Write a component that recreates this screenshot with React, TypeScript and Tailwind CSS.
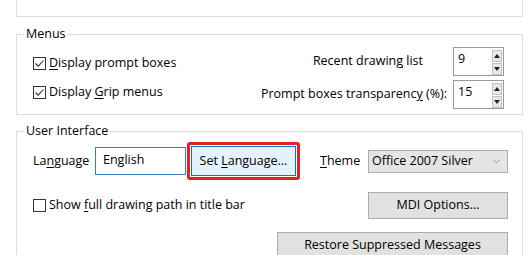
import { ChevronDown } from "lucide-react";

const CheckBox = ({ checked }: { checked: boolean }) => (
  <span className="w-[13px] h-[13px] border border-[#333333] bg-white flex items-center justify-center shrink-0">
    {checked && (
      <svg width="11" height="11" viewBox="0 0 11 11">
        <path d="M1.5 5.5 L4.2 8.2 L9.5 2.5" fill="none" stroke="#333333" strokeWidth="1.1" />
      </svg>
    )}
  </span>
);

const SpinBox = ({ value }: { value: string }) => (
  <div className="w-[51px] h-[29px] border border-[#9a9a9a] bg-white flex items-start justify-between pl-[4px] pr-[1px] pt-[1px]">
    <span className="leading-[20px]">{value}</span>
    <div className="flex flex-col gap-[1px] pt-[1px]">
      <span className="w-[10px] h-[12px] bg-[#e8e8e8] border border-[#c2c2c2] flex items-center justify-center">
        <svg width="6" height="4" viewBox="0 0 6 4">
          <path d="M0 4 L3 0 L6 4 Z" fill="#222" />
        </svg>
      </span>
      <span className="w-[10px] h-[12px] bg-[#e8e8e8] border border-[#c2c2c2] flex items-center justify-center">
        <svg width="6" height="4" viewBox="0 0 6 4">
          <path d="M0 0 L3 4 L6 0 Z" fill="#222" />
        </svg>
      </span>
    </div>
  </div>
);

const U = ({ children }: { children: string }) => (
  <span className="underline underline-offset-2 decoration-1">{children}</span>
);

export default function App() {
  return (
    <div
      className="w-[530px] h-[255px] bg-white overflow-hidden text-[12.5px] text-black"
      style={{ fontFamily: "'Open Sans', 'Noto Sans', sans-serif" }}
    >
      {/* previous group, cut off */}
      <div className="ml-[16px] mr-[7px] h-[17px] border-l border-r border-b border-[#dcdcdc]" />

      {/* Menus */}
      <fieldset className="mt-[8px] ml-[16px] mr-[7px] border border-[#dcdcdc] pb-[5px]">
        <legend className="ml-[7px] px-[2px] leading-[18px]">Menus</legend>
        <div className="flex justify-between">
          <div className="flex flex-col gap-[16px] pt-[14px] pl-[16px]">
            <div className="flex items-center gap-[3px] h-[13px]">
              <CheckBox checked />
              <span>
                <U>D</U>isplay prompt boxes
              </span>
            </div>
            <div className="flex items-center gap-[3px] h-[13px]">
              <CheckBox checked />
              <span>
                Display <U>G</U>rip menus
              </span>
            </div>
          </div>
          <div className="flex flex-col gap-[4px] pt-[4px] pr-[18px]">
            <div className="flex items-center justify-end h-[29px]">
              <span className="mr-[30px]">
                Recent drawin<U>g</U> list
              </span>
              <SpinBox value="9" />
            </div>
            <div className="flex items-center justify-end h-[29px]">
              <span className="mr-[6px]">
                Prompt boxes transparenc<U>y</U> (%):
              </span>
              <SpinBox value="15" />
            </div>
          </div>
        </div>
      </fieldset>

      {/* User Interface */}
      <fieldset className="mt-[7px] ml-[16px] mr-[7px] border border-[#dcdcdc] pb-[20px]">
        <legend className="ml-[7px] px-[2px] leading-[18px]">User Interface</legend>
        <div className="flex items-center pl-[16px] pt-[2px]">
          <span className="w-[62px]">
            La<U>n</U>guage
          </span>
          <div className="w-[91px] h-[28px] border border-[#3a7bb8] px-[7px] leading-[24px]">English</div>
          <div className="ml-[1px] border-[3px] border-[#e3211f] rounded-[3px] p-[1px]">
            <button className="w-[105px] h-[30px] bg-[#e5f1fb] border border-[#0078d7] flex items-center justify-center">
              <span>
                Set <U>L</U>anguage...
              </span>
            </button>
          </div>
          <span className="ml-[20px] w-[48px]">
            <U>T</U>heme
          </span>
          <div className="w-[140px] h-[23px] bg-[#e5e5e5] border border-[#adadad] flex items-center justify-between pl-[3px] pr-[5px]">
            <span>Office 2007 Silver</span>
            <ChevronDown size={11} strokeWidth={1.3} color="#555" />
          </div>
        </div>

        <div className="flex items-center justify-between mt-[12px] pl-[16px] pr-[14px]">
          <div className="flex items-center gap-[3px]">
            <CheckBox checked={false} />
            <span>
              Show <U>f</U>ull drawing path in title bar
            </span>
          </div>
          <button className="w-[140px] h-[27px] bg-[#e1e1e1] border border-[#adadad]">MDI Options...</button>
        </div>

        <div className="flex justify-end mt-[13px] pr-[14px]">
          <button className="w-[231px] h-[27px] bg-[#e1e1e1] border border-[#adadad]">
            Restore Suppressed Messages
          </button>
        </div>
      </fieldset>
    </div>
  );
}
